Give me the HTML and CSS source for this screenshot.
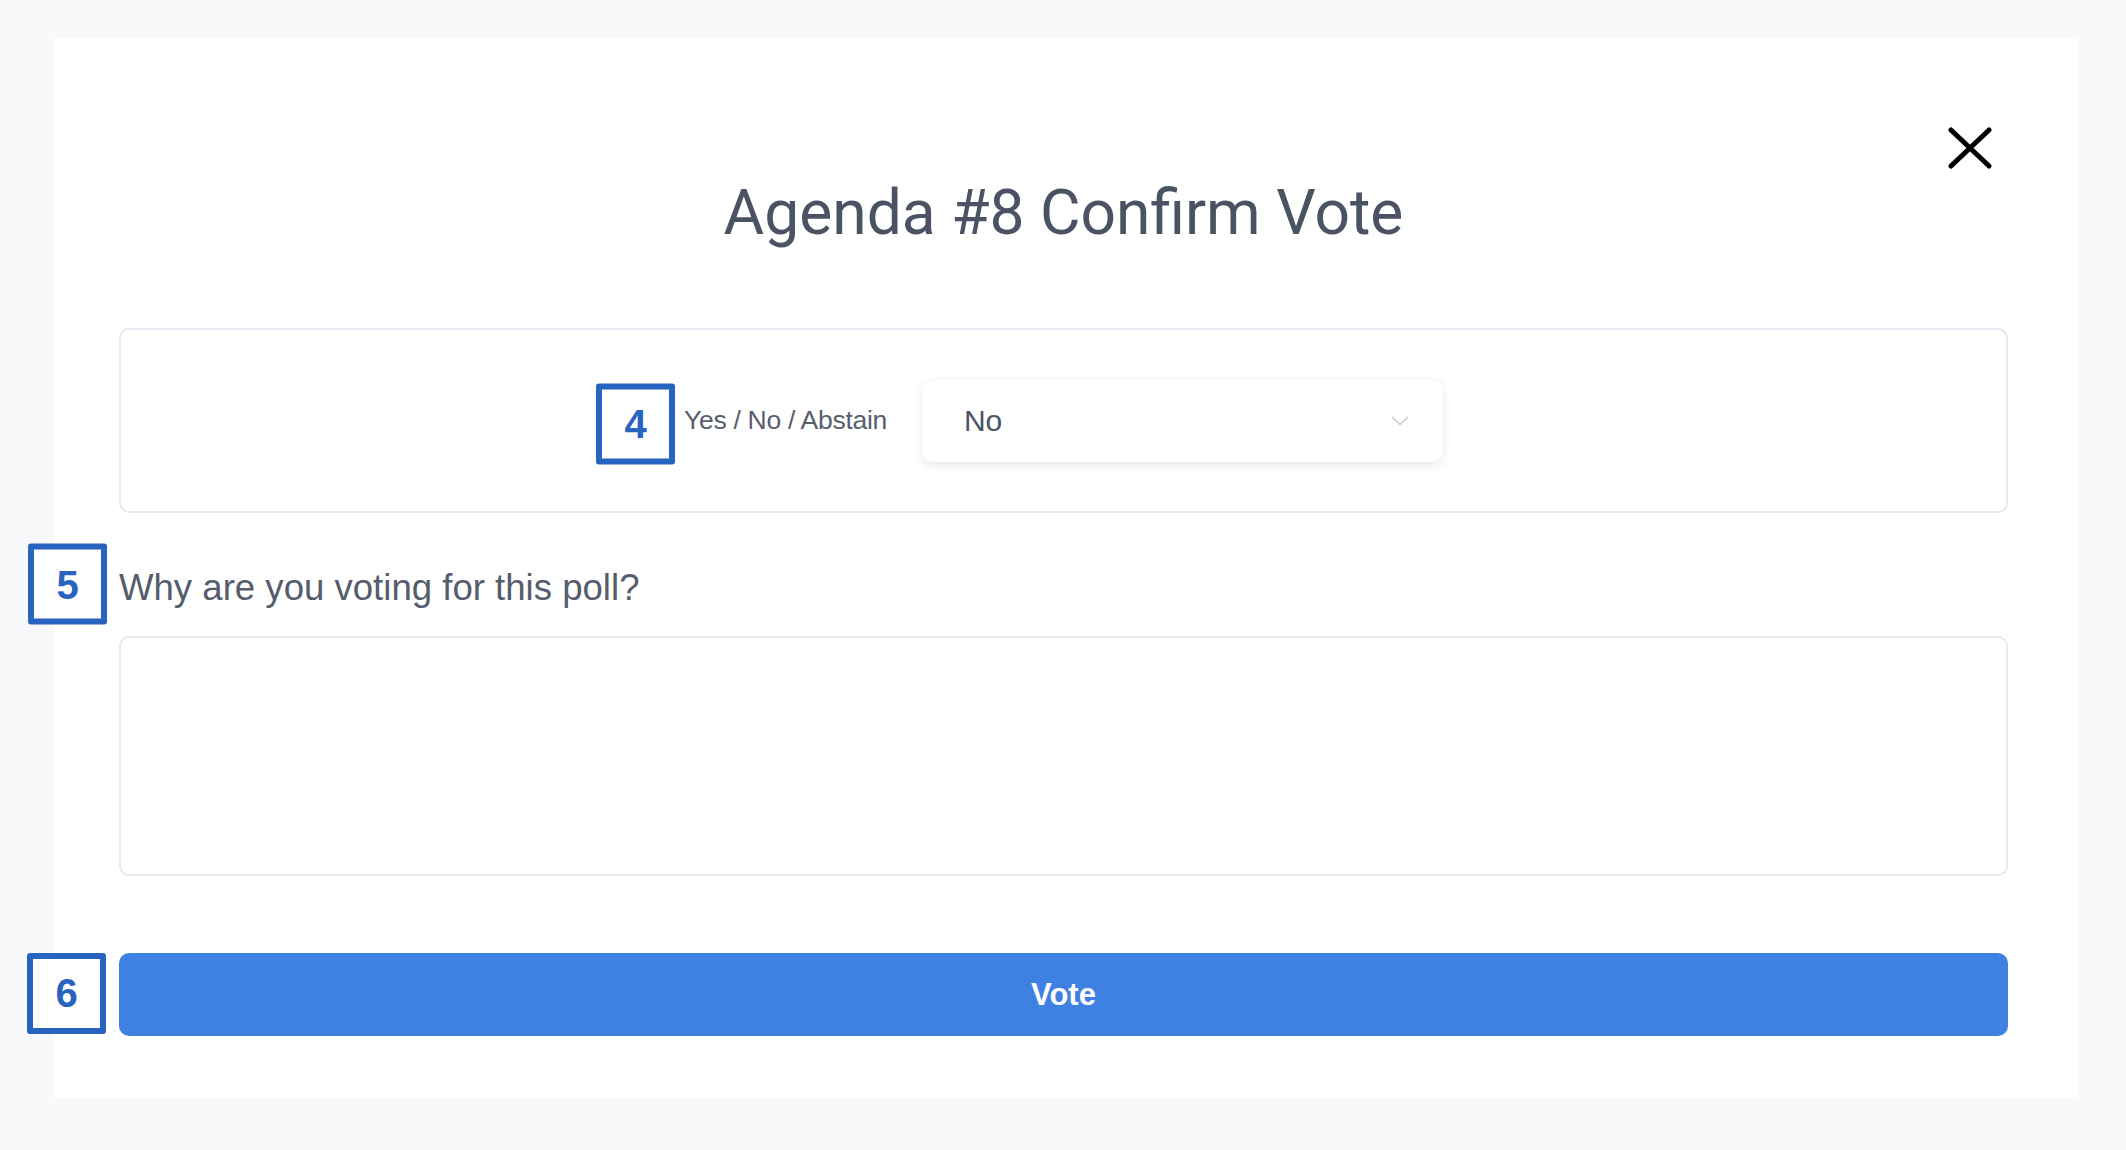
FILE: index.html
```html
<!DOCTYPE html>
<html lang="en">
<head>
<meta charset="utf-8">
<title>Agenda #8 Confirm Vote</title>
<link rel="stylesheet" href="styles.css">
</head>
<body>
<div class="card">
  <button class="close" aria-label="Close">
    <svg viewBox="0 0 44 42" width="44" height="42"><path d="M3 3 L41 39 M41 3 L3 39" stroke="#000" stroke-width="5" stroke-linecap="round" fill="none"/></svg>
  </button>
  <h1 class="title">Agenda #8 Confirm Vote</h1>
  <div class="choice-box">
    <div class="choice">
      <label class="choice-label">
        <span class="badge badge-4">4</span>
        Yes / No / Abstain
      </label>
      <div class="select">
        <span class="select-value">No</span>
        <svg class="chevron" viewBox="0 0 18 10" width="18" height="10"><path d="M1 1 L9 8.5 L17 1" stroke="#c4c9d2" stroke-width="1.6" fill="none"/></svg>
      </div>
    </div>
  </div>
  <div class="reason-label">
    <span class="badge badge-5">5</span>
    Why are you voting for this poll?
  </div>
  <div class="reason-box"></div>
  <div class="vote-row">
    <span class="badge badge-6">6</span>
    <button class="vote">Vote</button>
  </div>
</div>
</body>
</html>
```

FILE: styles.css
```css
* { box-sizing: border-box; }
html, body { margin: 0; padding: 0; }
body {
  background: #f8f9fb;
  width: 2126px;
  height: 1150px;
  font-family: "Liberation Sans", Arial, sans-serif;
  overflow: hidden;
}
.card {
  position: relative;
  margin: 38px 0 0 53px;
  width: 2025px;
  height: 1060px;
  background: #ffffff;
  padding: 139px 70px 0 66px;
  display: flex;
  flex-direction: column;
}
.close {
  position: absolute;
  top: 89px;
  right: 86px;
  width: 44px;
  height: 42px;
  padding: 0;
  border: 0;
  background: transparent;
  display: flex;
}
.title {
  margin: 0;
  height: 72px;
  line-height: 72px;
  text-align: center;
  font-family: Roboto, "Liberation Sans", sans-serif;
  font-weight: 400;
  font-size: 62.3px;
  color: #4a5263;
}
.choice-box {
  margin-top: 79px;
  height: 185px;
  border: 2px solid #e6e9f1;
  border-radius: 10px;
  display: flex;
  align-items: center;
  justify-content: center;
}
.choice {
  display: flex;
  align-items: center;
  gap: 35px;
}
.choice-label {
  position: relative;
  font-size: 26.5px;
  color: #575e6d;
  letter-spacing: -0.3px;
}
.select {
  width: 521px;
  height: 82px;
  border-radius: 10px;
  background: #fff;
  box-shadow: 0 3px 10px rgba(30, 40, 70, 0.10), 0 0 1px rgba(30, 40, 70, 0.08);
  display: flex;
  align-items: center;
  justify-content: space-between;
  padding: 0 34px 0 42px;
}
.select-value {
  font-size: 30px;
  color: #4a5263;
}
.badge {
  position: absolute;
  width: 79px;
  height: 81px;
  border: 6px solid #2763bf;
  border-radius: 3px;
  background: #fff;
  color: #2763bf;
  font-family: "Liberation Sans", Arial, sans-serif;
  font-weight: 700;
  font-size: 40px;
  display: flex;
  align-items: center;
  justify-content: center;
}
.badge-4 {
  right: calc(100% + 9px);
  top: 50%;
  transform: translateY(-50%);
  margin-top: 3px;
}
.reason-label {
  position: relative;
  margin-top: 54px;
  height: 42px;
  line-height: 42px;
  font-size: 36.6px;
  color: #555c6b;
}
.badge-5 {
  right: calc(100% + 12px);
  top: 50%;
  transform: translateY(-50%);
  margin-top: -4px;
}
.reason-box {
  margin-top: 27px;
  height: 240px;
  border: 2px solid #e6e9f1;
  border-radius: 10px;
}
.vote-row {
  position: relative;
  margin-top: 77px;
}
.badge-6 {
  right: calc(100% + 13px);
  top: 0;
}
.vote {
  display: block;
  width: 100%;
  height: 83px;
  border: 0;
  border-radius: 10px;
  background: #3f80e3;
  color: #ffffff;
  font-family: "Liberation Sans", Arial, sans-serif;
  font-weight: 700;
  font-size: 31px;
}
```
